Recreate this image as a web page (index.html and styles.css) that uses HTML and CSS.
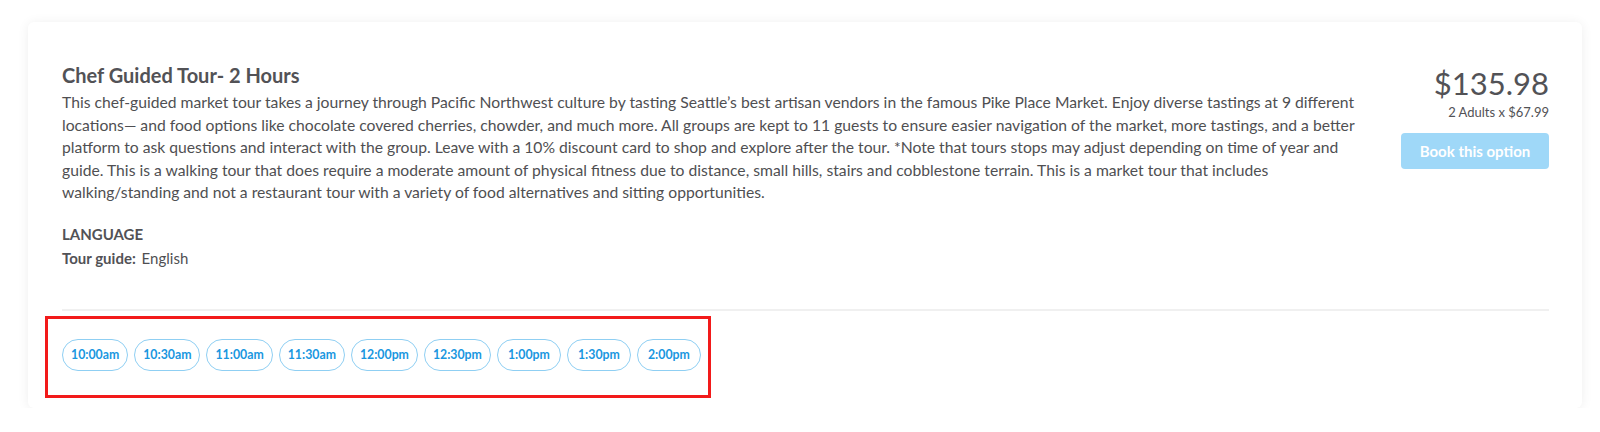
FILE: index.html
```html
<!DOCTYPE html>
<html lang="en">
<head>
<meta charset="utf-8">
<title>Chef Guided Tour</title>
<link rel="stylesheet" href="styles.css">
</head>
<body>
<div class="page">
  <div class="card">
    <div class="top">
      <div class="info">
        <h2 class="title">Chef Guided Tour- 2 Hours</h2>
        <p class="desc">This chef-guided market tour takes a journey through Pacific Northwest culture by tasting Seattle’s best artisan vendors in the famous Pike Place Market. Enjoy diverse tastings at 9 different locations— and food options like chocolate covered cherries, chowder, and much more. All groups are kept to 11 guests to ensure easier navigation of the market, more tastings, and a better platform to ask questions and interact with the group. Leave with a 10% discount card to shop and explore after the tour. *Note that tours stops may adjust depending on time of year and guide. This is a walking tour that does require a moderate amount of physical fitness due to distance, small hills, stairs and cobblestone terrain. This is a market tour that includes walking/standing and not a restaurant tour with a variety of food alternatives and sitting opportunities.</p>
        <div class="lang">
          <div class="lang-head">LANGUAGE</div>
          <div class="lang-row"><span class="lang-label">Tour guide:</span> English</div>
        </div>
      </div>
      <div class="price-col">
        <div class="price">$135.98</div>
        <div class="price-sub">2 Adults x $67.99</div>
        <button class="book" type="button">Book this option</button>
      </div>
    </div>
    <div class="times">
      <span class="pill">10:00am</span>
      <span class="pill">10:30am</span>
      <span class="pill">11:00am</span>
      <span class="pill">11:30am</span>
      <span class="pill">12:00pm</span>
      <span class="pill">12:30pm</span>
      <span class="pill">1:00pm</span>
      <span class="pill">1:30pm</span>
      <span class="pill">2:00pm</span>
    </div>
    <div class="highlight"></div>
  </div>
</div>
</body>
</html>
```

FILE: styles.css
```css
* { box-sizing: border-box; }
html, body { margin: 0; padding: 0; background: #ffffff; }
body { font-family: Lato, "Open Sans", sans-serif; color: #4f4f52; }
.page { padding: 22px 18px 0 28px; }
.card {
  position: relative;
  width: 1554px;
  height: 386px;
  background: #fff;
  border-radius: 6px;
  box-shadow: 0 1px 12px rgba(0, 0, 0, 0.07);
  padding: 40px 33px 0 34px;
}
.top {
  display: flex;
  justify-content: space-between;
  gap: 12px;
  border-bottom: 2px solid #f0f0f0;
  padding-bottom: 38px;
}
.info { width: 1321px; }
.title {
  margin: 0 0 3px;
  font-size: 20px;
  line-height: 26px;
  font-weight: 700;
  color: #525256;
}
.desc {
  margin: 0;
  font-size: 15.7px;
  line-height: 22.6px;
  color: #4f4f52;
}
.lang { margin-top: 18px; font-size: 15px; line-height: 24.5px; }
.lang-head { font-weight: 700; color: #525256; }
.lang-label { font-weight: 700; color: #525256; margin-right: 2px; }
.price-col {
  display: flex;
  flex-direction: column;
  align-items: flex-end;
  padding-top: 3px;
}
.price {
  font-size: 31px;
  line-height: 36px;
  color: #525256;
}
.price-sub {
  font-size: 13px;
  line-height: 16px;
  color: #525256;
  margin-top: 3px;
}
.book {
  margin-top: 13px;
  width: 148px;
  height: 36px;
  border: none;
  border-radius: 4px;
  background: #9fd8f8;
  color: #fff;
  font-family: Lato, sans-serif;
  font-weight: 700;
  font-size: 15px;
}
.times {
  display: flex;
  gap: 6px;
  padding-top: 28px;
}
.pill {
  display: inline-flex;
  align-items: center;
  justify-content: center;
  min-width: 64px;
  height: 32px;
  padding: 0 8px;
  border: 1px solid #8fcff3;
  border-radius: 16px;
  color: #1a97df;
  font-size: 12.3px;
  font-weight: 700;
}
.highlight {
  position: absolute;
  left: 17px;
  top: 294px;
  width: 666px;
  height: 82px;
  border: 3px solid #f21a1a;
  pointer-events: none;
}
```
